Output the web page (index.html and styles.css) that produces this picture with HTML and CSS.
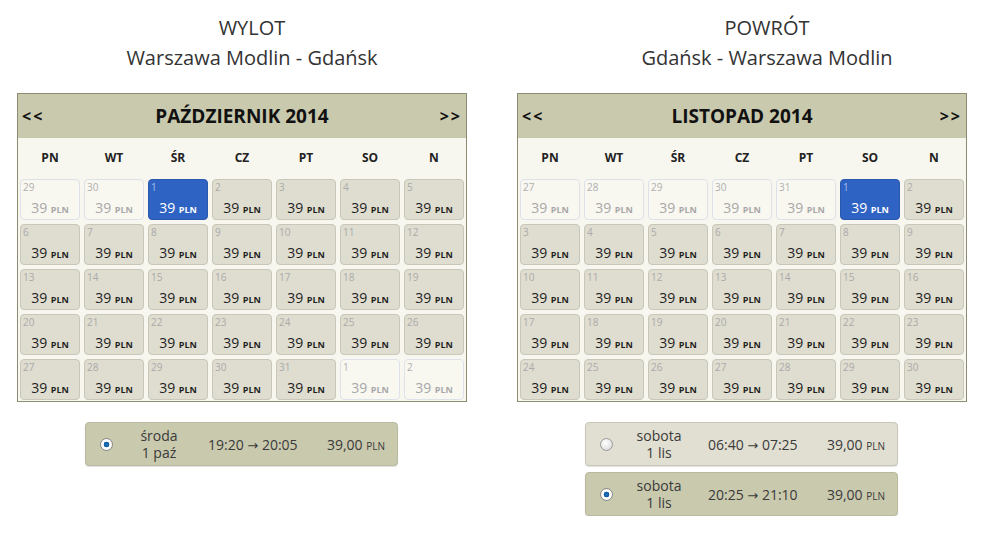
FILE: index.html
```html
<!DOCTYPE html>
<html lang="pl">
<head>
<meta charset="utf-8">
<title>Wybór lotu</title>
<link rel="stylesheet" href="styles.css">
</head>
<body>
<div class="page">
  <div class="col">
    <div class="title title-out">
      <div>WYLOT</div>
      <div>Warszawa Modlin - Gdańsk</div>
    </div>
    <div class="cal">
      <div class="cal-head">
        <span class="nav">&lt;&lt;</span>
        <span class="month">PAŹDZIERNIK 2014</span>
        <span class="nav">&gt;&gt;</span>
      </div>
      <div class="weekdays">
        <span>PN</span><span>WT</span><span>ŚR</span><span>CZ</span><span>PT</span><span>SO</span><span>N</span>
      </div>
      <div class="grid">
        <div class="day other"><span class="num">29</span><span class="price">39 <small>PLN</small></span></div>
        <div class="day other"><span class="num">30</span><span class="price">39 <small>PLN</small></span></div>
        <div class="day sel"><span class="num">1</span><span class="price">39 <small>PLN</small></span></div>
        <div class="day"><span class="num">2</span><span class="price">39 <small>PLN</small></span></div>
        <div class="day"><span class="num">3</span><span class="price">39 <small>PLN</small></span></div>
        <div class="day"><span class="num">4</span><span class="price">39 <small>PLN</small></span></div>
        <div class="day"><span class="num">5</span><span class="price">39 <small>PLN</small></span></div>
        <div class="day"><span class="num">6</span><span class="price">39 <small>PLN</small></span></div>
        <div class="day"><span class="num">7</span><span class="price">39 <small>PLN</small></span></div>
        <div class="day"><span class="num">8</span><span class="price">39 <small>PLN</small></span></div>
        <div class="day"><span class="num">9</span><span class="price">39 <small>PLN</small></span></div>
        <div class="day"><span class="num">10</span><span class="price">39 <small>PLN</small></span></div>
        <div class="day"><span class="num">11</span><span class="price">39 <small>PLN</small></span></div>
        <div class="day"><span class="num">12</span><span class="price">39 <small>PLN</small></span></div>
        <div class="day"><span class="num">13</span><span class="price">39 <small>PLN</small></span></div>
        <div class="day"><span class="num">14</span><span class="price">39 <small>PLN</small></span></div>
        <div class="day"><span class="num">15</span><span class="price">39 <small>PLN</small></span></div>
        <div class="day"><span class="num">16</span><span class="price">39 <small>PLN</small></span></div>
        <div class="day"><span class="num">17</span><span class="price">39 <small>PLN</small></span></div>
        <div class="day"><span class="num">18</span><span class="price">39 <small>PLN</small></span></div>
        <div class="day"><span class="num">19</span><span class="price">39 <small>PLN</small></span></div>
        <div class="day"><span class="num">20</span><span class="price">39 <small>PLN</small></span></div>
        <div class="day"><span class="num">21</span><span class="price">39 <small>PLN</small></span></div>
        <div class="day"><span class="num">22</span><span class="price">39 <small>PLN</small></span></div>
        <div class="day"><span class="num">23</span><span class="price">39 <small>PLN</small></span></div>
        <div class="day"><span class="num">24</span><span class="price">39 <small>PLN</small></span></div>
        <div class="day"><span class="num">25</span><span class="price">39 <small>PLN</small></span></div>
        <div class="day"><span class="num">26</span><span class="price">39 <small>PLN</small></span></div>
        <div class="day"><span class="num">27</span><span class="price">39 <small>PLN</small></span></div>
        <div class="day"><span class="num">28</span><span class="price">39 <small>PLN</small></span></div>
        <div class="day"><span class="num">29</span><span class="price">39 <small>PLN</small></span></div>
        <div class="day"><span class="num">30</span><span class="price">39 <small>PLN</small></span></div>
        <div class="day"><span class="num">31</span><span class="price">39 <small>PLN</small></span></div>
        <div class="day other"><span class="num">1</span><span class="price">39 <small>PLN</small></span></div>
        <div class="day other"><span class="num">2</span><span class="price">39 <small>PLN</small></span></div>
      </div>
    </div>
    <div class="flights">
      <div class="flight active">
        <span class="radio on"></span>
        <span class="fdate"><span class="fline">środa</span><span class="fline">1 paź</span></span>
        <span class="ftime">19:20 <span class="arrow">→</span> 20:05</span>
        <span class="fprice">39,00 <small>PLN</small></span>
      </div>
    </div>
  </div>

  <div class="col">
    <div class="title title-ret">
      <div>POWRÓT</div>
      <div>Gdańsk - Warszawa Modlin</div>
    </div>
    <div class="cal">
      <div class="cal-head">
        <span class="nav">&lt;&lt;</span>
        <span class="month">LISTOPAD 2014</span>
        <span class="nav">&gt;&gt;</span>
      </div>
      <div class="weekdays">
        <span>PN</span><span>WT</span><span>ŚR</span><span>CZ</span><span>PT</span><span>SO</span><span>N</span>
      </div>
      <div class="grid">
        <div class="day other"><span class="num">27</span><span class="price">39 <small>PLN</small></span></div>
        <div class="day other"><span class="num">28</span><span class="price">39 <small>PLN</small></span></div>
        <div class="day other"><span class="num">29</span><span class="price">39 <small>PLN</small></span></div>
        <div class="day other"><span class="num">30</span><span class="price">39 <small>PLN</small></span></div>
        <div class="day other"><span class="num">31</span><span class="price">39 <small>PLN</small></span></div>
        <div class="day sel"><span class="num">1</span><span class="price">39 <small>PLN</small></span></div>
        <div class="day"><span class="num">2</span><span class="price">39 <small>PLN</small></span></div>
        <div class="day"><span class="num">3</span><span class="price">39 <small>PLN</small></span></div>
        <div class="day"><span class="num">4</span><span class="price">39 <small>PLN</small></span></div>
        <div class="day"><span class="num">5</span><span class="price">39 <small>PLN</small></span></div>
        <div class="day"><span class="num">6</span><span class="price">39 <small>PLN</small></span></div>
        <div class="day"><span class="num">7</span><span class="price">39 <small>PLN</small></span></div>
        <div class="day"><span class="num">8</span><span class="price">39 <small>PLN</small></span></div>
        <div class="day"><span class="num">9</span><span class="price">39 <small>PLN</small></span></div>
        <div class="day"><span class="num">10</span><span class="price">39 <small>PLN</small></span></div>
        <div class="day"><span class="num">11</span><span class="price">39 <small>PLN</small></span></div>
        <div class="day"><span class="num">12</span><span class="price">39 <small>PLN</small></span></div>
        <div class="day"><span class="num">13</span><span class="price">39 <small>PLN</small></span></div>
        <div class="day"><span class="num">14</span><span class="price">39 <small>PLN</small></span></div>
        <div class="day"><span class="num">15</span><span class="price">39 <small>PLN</small></span></div>
        <div class="day"><span class="num">16</span><span class="price">39 <small>PLN</small></span></div>
        <div class="day"><span class="num">17</span><span class="price">39 <small>PLN</small></span></div>
        <div class="day"><span class="num">18</span><span class="price">39 <small>PLN</small></span></div>
        <div class="day"><span class="num">19</span><span class="price">39 <small>PLN</small></span></div>
        <div class="day"><span class="num">20</span><span class="price">39 <small>PLN</small></span></div>
        <div class="day"><span class="num">21</span><span class="price">39 <small>PLN</small></span></div>
        <div class="day"><span class="num">22</span><span class="price">39 <small>PLN</small></span></div>
        <div class="day"><span class="num">23</span><span class="price">39 <small>PLN</small></span></div>
        <div class="day"><span class="num">24</span><span class="price">39 <small>PLN</small></span></div>
        <div class="day"><span class="num">25</span><span class="price">39 <small>PLN</small></span></div>
        <div class="day"><span class="num">26</span><span class="price">39 <small>PLN</small></span></div>
        <div class="day"><span class="num">27</span><span class="price">39 <small>PLN</small></span></div>
        <div class="day"><span class="num">28</span><span class="price">39 <small>PLN</small></span></div>
        <div class="day"><span class="num">29</span><span class="price">39 <small>PLN</small></span></div>
        <div class="day"><span class="num">30</span><span class="price">39 <small>PLN</small></span></div>
      </div>
    </div>
    <div class="flights">
      <div class="flight">
        <span class="radio"></span>
        <span class="fdate"><span class="fline">sobota</span><span class="fline">1 lis</span></span>
        <span class="ftime">06:40 <span class="arrow">→</span> 07:25</span>
        <span class="fprice">39,00 <small>PLN</small></span>
      </div>
      <div class="flight active">
        <span class="radio on"></span>
        <span class="fdate"><span class="fline">sobota</span><span class="fline">1 lis</span></span>
        <span class="ftime">20:25 <span class="arrow">→</span> 21:10</span>
        <span class="fprice">39,00 <small>PLN</small></span>
      </div>
    </div>
  </div>
</div>
</body>
</html>
```
FILE: styles.css
```css
* { box-sizing: border-box; }

body {
  margin: 0;
  background: #ffffff;
  font-family: "Open Sans", "Liberation Sans", sans-serif;
  color: #333333;
}

.page {
  display: flex;
  padding: 13px 0 0 17px;
}

.col {
  width: 500px;
  flex: none;
}

.title {
  font-size: 20px;
  line-height: 30px;
  text-align: center;
  color: #333333;
}
.title-out { width: 470px; }
.title-ret { width: 500px; }

.cal {
  width: 450px;
  margin-top: 20px;
  border: 1px solid #8c8c70;
  background: #f8f7ef;
}

.cal-head {
  height: 44px;
  background: #c9c9ae;
  display: flex;
  align-items: center;
  justify-content: space-between;
  padding: 0 4px 0 4px;
  color: #111111;
  font-weight: 700;
}

.nav {
  font-size: 16px;
  letter-spacing: 2px;
  width: 26px;
}
.nav:last-child { text-align: right; }

.month {
  font-size: 19px;
}

.weekdays {
  display: grid;
  grid-template-columns: repeat(7, 60px);
  column-gap: 4px;
  padding: 0 2px;
  height: 39px;
  align-items: center;
  text-align: center;
  font-size: 12px;
  font-weight: 700;
  color: #222222;
}

.grid {
  display: grid;
  grid-template-columns: repeat(7, 60px);
  grid-auto-rows: 41px;
  gap: 4px;
  padding: 2px 2px 1px 2px;
}

.day {
  display: flex;
  flex-direction: column;
  background: #dfddd0;
  border: 1px solid #c9c7b9;
  border-radius: 4px;
}

.num {
  font-size: 10px;
  line-height: 14px;
  padding: 0 0 0 2px;
  color: #aaaaaa;
}

.price {
  margin-top: 5px;
  text-align: center;
  font-size: 14px;
  line-height: 17px;
  font-weight: 400;
  color: #1f1f1f;
}
.price small {
  font-size: 9px;
  font-weight: 700;
}

.day.other {
  background: #f8f7f0;
  border-color: #dde2ea;
}
.day.other .price { color: #a8a8a8; }
.day.other .num { color: #b0b0b0; }

.day.sel {
  background: #2f63c3;
  border-color: #2a58ae;
}
.day.sel .num { color: #a9bde6; }
.day.sel .price { color: #ffffff; }

.flights {
  width: 313px;
  margin: 20px 0 0 68px;
  display: flex;
  flex-direction: column;
  gap: 6px;
}

.flight {
  height: 44px;
  display: flex;
  align-items: center;
  padding: 0 12px 0 14px;
  background: #e1dfd1;
  border: 1px solid #c8c6b6;
  border-radius: 4px;
  box-shadow: 0 1px 1px rgba(0, 0, 0, 0.12);
  font-size: 14px;
  color: #3a3a3a;
}
.flight.active {
  background: #c9c9ae;
  border-color: #b9b99d;
}

.radio {
  width: 13px;
  height: 13px;
  border-radius: 50%;
  flex: none;
  border: 1px solid #9a9a9a;
  background: radial-gradient(circle at 40% 35%, #ffffff 0%, #e6e6e6 60%, #c8c8c8 100%);
}
.radio.on {
  background: radial-gradient(circle, #1a78c2 0%, #0f5a9c 34%, #ffffff 40%, #eeeeee 100%);
  border-color: #888888;
}

.fdate {
  width: 72px;
  margin-left: 10px;
  display: flex;
  flex-direction: column;
  align-items: center;
}
.fline {
  display: block;
  height: 17px;
  line-height: 17px;
}

.ftime {
  margin-left: 13px;
}
.arrow {
  font-family: "DejaVu Sans", sans-serif;
  font-size: 13px;
}

.fprice {
  margin-left: auto;
}
.fprice small {
  font-size: 10px;
}
```
